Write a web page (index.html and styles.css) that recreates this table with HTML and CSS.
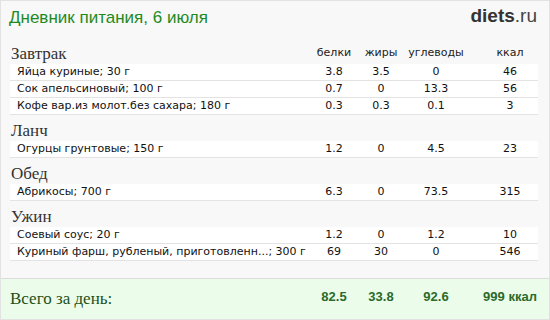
FILE: index.html
```html
<!DOCTYPE html>
<html lang="ru">
<head>
<meta charset="utf-8">
<title>Дневник питания</title>
<link rel="stylesheet" href="styles.css">
</head>
<body>
<div class="card">
  <div class="top">
    <h1 class="title">Дневник питания, 6 июля</h1>
    <div class="logo"><b>diets</b>.ru</div>
  </div>

  <div class="section">
    <div class="head grid">
      <span class="meal">Завтрак</span>
      <span class="lbl">белки</span><span class="lbl">жиры</span><span class="lbl">углеводы</span><span class="lbl kcal">ккал</span>
    </div>
    <div class="row grid"><span class="name">Яйца куриные; 30 г</span><span>3.8</span><span>3.5</span><span>0</span><span class="kcal">46</span></div>
    <div class="row grid"><span class="name">Сок апельсиновый; 100 г</span><span>0.7</span><span>0</span><span>13.3</span><span class="kcal">56</span></div>
    <div class="row grid"><span class="name">Кофе вар.из молот.без сахара; 180 г</span><span>0.3</span><span>0.3</span><span>0.1</span><span class="kcal">3</span></div>
  </div>

  <div class="section">
    <div class="head grid"><span class="meal">Ланч</span></div>
    <div class="row grid"><span class="name">Огурцы грунтовые; 150 г</span><span>1.2</span><span>0</span><span>4.5</span><span class="kcal">23</span></div>
  </div>

  <div class="section">
    <div class="head grid"><span class="meal">Обед</span></div>
    <div class="row grid"><span class="name">Абрикосы; 700 г</span><span>6.3</span><span>0</span><span>73.5</span><span class="kcal">315</span></div>
  </div>

  <div class="section">
    <div class="head grid"><span class="meal">Ужин</span></div>
    <div class="row grid"><span class="name">Соевый соус; 20 г</span><span>1.2</span><span>0</span><span>1.2</span><span class="kcal">10</span></div>
    <div class="row grid"><span class="name">Куриный фарш, рубленый, приготовленн...; 300 г</span><span>69</span><span>30</span><span>0</span><span class="kcal">546</span></div>
  </div>

  <div class="total">
    <div class="grid total-grid">
      <span class="total-label">Всего за день:</span>
      <span>82.5</span><span>33.8</span><span>92.6</span><span class="kcal">999 ккал</span>
    </div>
  </div>
</div>
</body>
</html>
```

FILE: styles.css
```css
html, body {
  margin: 0;
  padding: 0;
  background: #ffffff;
}

.card {
  box-sizing: border-box;
  width: 550px;
  height: 320px;
  border: 1px solid #e2e2e2;
  background: #f8f8f8;
  display: flex;
  flex-direction: column;
}

.top {
  height: 37px;
  display: flex;
  justify-content: space-between;
  align-items: flex-start;
  padding: 0 12px 0 8px;
}

.title {
  margin: 7px 0 0 0;
  font-family: "Liberation Sans", Arial, sans-serif;
  font-weight: normal;
  font-size: 17px;
  line-height: 20px;
  color: #1f8a1f;
}

.logo {
  margin-top: 4px;
  font-family: "Liberation Sans", Arial, sans-serif;
  font-size: 19px;
  line-height: 22px;
  color: #444;
}

.logo b {
  color: #333;
}

.section {
  margin: 0 11px 0 9px;
}

.grid {
  display: grid;
  grid-template-columns: 1fr 48px 46px 64px 70px;
}

.grid > span {
  text-align: center;
}

.grid > .kcal {
  padding-left: 14px;
}

.grid > .name,
.grid > .meal,
.grid > .total-label {
  text-align: left;
}

.head {
  height: 26px;
  align-items: end;
}

.meal {
  font-family: "Liberation Serif", "Times New Roman", serif;
  font-size: 17px;
  line-height: 20px;
  color: #333;
  padding-left: 1px;
}

.lbl {
  font-family: "DejaVu Sans", Verdana, sans-serif;
  font-size: 11px;
  line-height: 14px;
  color: #222;
  padding-bottom: 4px;
}

.row {
  height: 16px;
  background: #ffffff;
  border-bottom: 1px solid #e3e3e3;
  font-family: "DejaVu Sans", Verdana, sans-serif;
  font-size: 11px;
  line-height: 16px;
  color: #111;
}

.row .name {
  padding-left: 7px;
  white-space: nowrap;
  overflow: hidden;
}

.total {
  margin-top: auto;
  height: 40px;
  background: #ebfdea;
  border-top: 1px solid #dcdcdc;
  display: flex;
  align-items: center;
  padding: 0 11px 0 9px;
}

.total-grid {
  flex: 1;
  font-family: "Liberation Sans", Arial, sans-serif;
  font-weight: bold;
  font-size: 13px;
  color: #2a6a2a;
}

.total-label {
  font-family: "Liberation Serif", "Times New Roman", serif;
  font-weight: normal;
  font-size: 17px;
  color: #1a4f1a;
}
```
